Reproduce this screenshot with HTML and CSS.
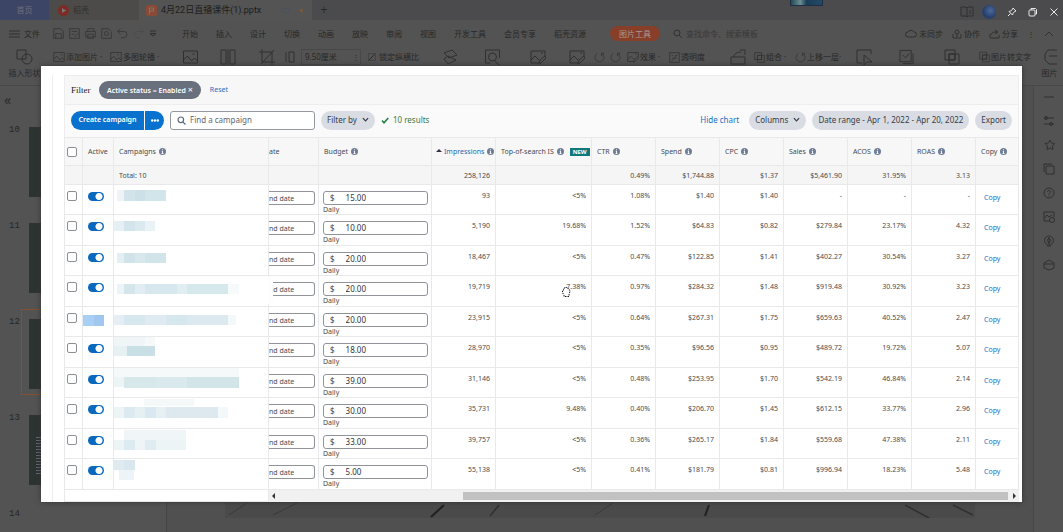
FILE: index.html
```html
<!DOCTYPE html>
<html lang="zh-CN">
<head>
<meta charset="utf-8">
<title>4月22日直播课件(1).pptx</title>
<link rel="stylesheet" href="styles.css">
</head>
<body>
<svg class="defs" width="0" height="0" aria-hidden="true">
  <symbol id="info" viewBox="0 0 14 14"><circle cx="7" cy="7" r="7" fill="#707d97"/><path d="M7 6v5M5.500 6.500H7M5 11h4M7 2.500v2" stroke="#fff" stroke-width="1.800"/></symbol>
  <symbol id="pic" viewBox="0 0 16 16"><path d="M1 2h14v12H1zM1 11l4-4 4 5 3-3 3 3M10 5h2"/></symbol>
  <symbol id="picpen" viewBox="0 0 16 16"><path d="M9 14H1V2h14v5M1 11l4-4 4 4M11 4h2M9 15l1-4 5-4 1 2-5 5z"/></symbol>
  <symbol id="chev" viewBox="0 0 8 8"><path d="M1 2.500l3 3 3-3" fill="none" stroke="currentColor" stroke-width="1.400"/></symbol>
  <symbol id="layers" viewBox="0 0 16 16"><path d="M1 1h10v10H1zM5 5h10v10H5zM5 5h6v6H5z"/></symbol>
  <symbol id="rot" viewBox="0 0 16 16"><path d="M11 2a6.500 6.500 0 1 1-6 0M11 6V2h4"/></symbol>
</svg>
<div class="app">
  <header class="titlebar">
    <a class="tab home" href="#">首页</a>
    <a class="tab docer" href="#"><svg width="11" height="11" viewBox="0 0 11 11"><circle cx="5.500" cy="5.500" r="5.500" fill="#7d2b25"/><path d="M4 3l4 2.500L4 8z" fill="#777"/></svg>稻壳</a>
    <a class="tab doc" href="#"><svg width="11" height="11" viewBox="0 0 11 11"><rect width="11" height="11" rx="2" fill="#8b4a36"/><path d="M3.500 9V3h4v3h-4" fill="none" stroke="#777"/></svg><span>4月22日直播课件(1).pptx</span><i class="cloud"></i><i class="dot"></i></a>
    <button class="plus" aria-label="New tab">+</button>
    <i class="recorder"></i>
    <div class="winctl">
      <svg class="dark" width="14" height="12" viewBox="0 0 14 12"><path d="M1 1h5l1 1 1-1h5v9H8l-1 1-1-1H1zM7 2v9M10 4v4"/></svg>
      <i class="avatar"></i>
      <button aria-label="Pin"><svg width="10" height="10" viewBox="0 0 10 10"><path d="M6 1l3 3-1.500.5L6 6.500 5.500 8 2 4.500 3.500 4 5.500 2.500zM3.500 6.500L1 9"/></svg></button>
      <button aria-label="Restore"><svg width="10" height="10" viewBox="0 0 10 10"><rect x="1" y="3" width="6" height="6" rx="1"/><path d="M3 3V1.500h4.500l1 1V7H7"/></svg></button>
      <button aria-label="Close"><svg width="10" height="10" viewBox="0 0 10 10"><path d="M1.500 1.500l7 7M8.500 1.500l-7 7"/></svg></button>
    </div>
  </header>
  <nav class="menubar">
    <span class="file"><svg width="11" height="10" viewBox="0 0 11 10"><path d="M0 2h11M0 5h11M0 8h11"/></svg>文件</span>
    <span class="quick">
      <svg width="11" height="11" viewBox="0 0 16 16"><path d="M1 1h10l4 4v10H1zM4 15V8h8v7"/></svg>
      <svg width="11" height="11" viewBox="0 0 16 16"><path d="M1 1h14v14H1zM4 5h8M4 9h4M8 13l6-6"/></svg>
      <svg width="11" height="11" viewBox="0 0 16 16"><path d="M4 5V1h9v4M1 5h14v8H1zM4 9h8v6H4z"/></svg>
      <svg width="11" height="11" viewBox="0 0 16 16"><path d="M1 1h10l4 4M1 1v14h14V6"/><circle cx="8" cy="8" r="3"/></svg>
      <svg width="11" height="11" viewBox="0 0 16 16"><path d="M5 1L1 5l4 4M1 5h9a4 4 0 0 1 0 9H6"/></svg>
      <svg class="faint" width="11" height="11" viewBox="0 0 16 16"><path d="M11 1l4 4-4 4M15 5H6a4 4 0 0 0 0 9h4"/></svg>
      <svg width="8" height="8" viewBox="0 0 8 8"><path d="M1 1h6M1 3.500h6L4 6z"/></svg>
    </span>
    <span class="menus"><a href="#">开始</a><a href="#">插入</a><a href="#">设计</a><a href="#">切换</a><a href="#">动画</a><a href="#">放映</a><a href="#">审阅</a><a href="#">视图</a><a href="#">开发工具</a><a href="#">会员专享</a><a href="#">稻壳资源</a><a class="active" href="#">图片工具</a></span>
    <span class="find"><svg width="9" height="9" viewBox="0 0 9 9"><circle cx="4" cy="4" r="3"/><path d="M6 6l3 3"/></svg>查找命令、搜索模板</span>
    <span class="share">
      <span><svg width="12" height="10" viewBox="0 0 12 10"><path d="M9 8H3a2.500 2.500 0 0 1 0-5 3.500 3.500 0 0 1 6 0 2.500 2.500 0 0 1 0 5z"/></svg>未同步</span>
      <span><svg width="10" height="10" viewBox="0 0 10 10"><circle cx="5" cy="3" r="2"/><path d="M1 5v4h8V5M5 5v3"/></svg>协作</span>
      <span><svg width="11" height="10" viewBox="0 0 11 10"><path d="M1 5v4h9V6M2 6c1-3 3-3 6-3M6 1l3 2-3 2"/></svg>分享</span>
      <span>⋮</span><svg width="10" height="6" viewBox="0 0 10 6"><path d="M1 5l4-4 4 4"/></svg>
    </span>
  </nav>
  <section class="ribbon">
    <span class="tall"><svg width="17" height="16" viewBox="0 0 17 16"><path d="M1 1h9v9H1z"/><circle cx="11" cy="10" r="5"/></svg>插入形状</span>
    <span><svg width="12" height="12"><use href="#pic"/></svg>添加图片 ·</span>
    <span><svg width="12" height="12"><use href="#pic"/></svg>多图轮播 ·</span>
    <span><svg width="17" height="16"><use href="#pic"/></svg></span>
    <span><svg width="16" height="16" viewBox="0 0 16 16"><path d="M1 1h5v14H1zM10 1h5v14h-5zM8 0v16"/></svg></span>
    <span><svg width="16" height="16" viewBox="0 0 16 16"><path d="M3 0v13h13M0 3h13v13M2 15L15 1"/></svg></span>
    <span><svg width="10" height="12" viewBox="0 0 10 12"><path d="M1 1v10M4 1h5v10H4z"/></svg></span>
    <span class="size">9.50厘米<b>⋮</b></span>
    <label><input type="checkbox" checked>锁定纵横比</label>
    <span><svg width="16" height="16" viewBox="0 0 16 16"><path d="M2 4l8-3 5 5-8 3zM2 10l4-3 8 4-8 4z"/></svg></span>
    <span><svg width="17" height="16" viewBox="0 0 16 16"><path d="M6 14H1V1h14v8M10 12l5 4"/><circle cx="8" cy="8" r="4"/></svg></span>
    <span><svg width="16" height="16"><use href="#picpen"/></svg></span>
    <span><svg width="16" height="16"><use href="#picpen"/></svg></span>
    <span><svg width="11" height="11"><use href="#rot"/></svg></span>
    <span><svg width="11" height="11"><use href="#rot"/></svg></span>
    <span><svg width="12" height="12"><use href="#picpen"/></svg>效果 ·</span>
    <span><svg width="11" height="11" viewBox="0 0 16 16"><path d="M1 1h14v14H1zM4 5h2M9 5h2M5 9h6M4 13L12 4"/></svg>透明度</span>
    <span><svg width="16" height="16" viewBox="0 0 16 16"><path d="M1 8h14v7H1zM10 1h5v5M4 8c0-4 4-5 7-5"/></svg></span>
    <span><svg width="11" height="11"><use href="#layers"/></svg>组合 ·</span>
    <span><svg width="11" height="11"><use href="#rot"/></svg>上移一层·</span>
    <span><svg width="16" height="16" viewBox="0 0 16 16"><path d="M6 14H1V1h14v4M8 6v10l3-3h5z"/></svg></span>
    <span><svg width="15" height="16" viewBox="0 0 16 16"><path d="M1 1h12v12H1zM15 4v11H4M4 6l3 3 4-5"/></svg></span>
    <span><svg width="16" height="16"><use href="#layers"/></svg></span>
    <span><svg width="11" height="12"><use href="#layers"/></svg>图片转文字</span>
    <span class="tall last"><svg width="16" height="16" viewBox="0 0 16 16"><path d="M15 1H6L3 5v6l4 4h8M7 7h8"/></svg>图片</span>
  </section>
  <main class="work">
    <aside class="slides">
      <button class="fold" aria-label="Collapse">«</button>
      <ol>
        <li><span>10</span><i></i></li>
        <li><span>11</span><i></i></li>
        <li class="current"><span>12</span><i></i></li>
        <li class="texty"><span>13</span><i></i></li>
        <li class="blank"><span>14</span><i></i></li>
      </ol>
    </aside>
    <div class="canvas"><svg class="slide" viewBox="0 0 750 16" preserveAspectRatio="none"><path d="M4 13L22 1M48 13L72 1M370 13L388 1" stroke="#3a3a3a"/><path d="M206 15l13-12M480 14l4-11" stroke="#202020" stroke-width="2"/><path d="M265 14l9-11M680 3l24 13M728 3l20 10" stroke="#303030" stroke-width="1.500"/></svg></div>
    <aside class="rail">
      <svg viewBox="0 0 12 12"><path d="M1 6h10"/></svg>
      <svg viewBox="0 0 12 12"><path d="M1 3h10M1 9h10"/><circle cx="3" cy="3" r="1.500"/><circle cx="8" cy="9" r="1.500"/></svg>
      <svg viewBox="0 0 12 12"><path d="M7 1l1.500 3 3 .5-2 2.500.5 3.500L7 9l-3 1.500L4.500 7 2 4.500 5.500 4z"/></svg>
      <svg viewBox="0 0 12 12"><path d="M1 9V1h8M3 3h8v8H3z"/></svg>
      <svg viewBox="0 0 12 12"><circle cx="6" cy="6" r="5"/><path d="M4.500 5c0-2 3-2 3 0C7.500 6 6 6 6 7.500M6 8.500v1"/></svg>
      <svg viewBox="0 0 12 12"><path d="M7 10H1V1h10v5M2 7l2-3 2 2 3-2"/><circle cx="9" cy="9" r="2.500"/></svg>
      <svg viewBox="0 0 12 12"><circle cx="6" cy="5.500" r="4.500"/><path d="M6 2v7M4 5.500L6 3l2 2.500L6 8zM4 11h4"/></svg>
      <svg viewBox="0 0 12 12"><path d="M1 4l5-3 5 3v5l-5 2-5-2zM1 5h10"/></svg>
    </aside>
  </main>
</div>

<div class="overlay">
  <div class="viewer" role="dialog" aria-label="Campaigns">
    <div class="panel">
      <div class="filterbar"><span class="word">Filter</span><button class="status">Active status = Enabled <span>×</span></button><a href="#">Reset</a></div>
      <div class="toolbar">
        <div class="split"><button>Create campaign</button><button aria-label="More"><svg width="8" height="3" viewBox="0 0 8 3"><circle cx="1.200" cy="1.500" r="1.200"/><circle cx="4" cy="1.500" r="1.200"/><circle cx="6.800" cy="1.500" r="1.200"/></svg></button></div>
        <label class="search"><svg width="9" height="9" viewBox="0 0 9 9"><circle cx="3.800" cy="3.800" r="2.800"/><path d="M5.800 5.800L8.500 8.500"/></svg><input type="text" placeholder="Find a campaign" aria-label="Find a campaign"></label>
        <button class="pill">Filter by <svg width="7" height="7"><use href="#chev"/></svg></button>
        <span class="results"><svg width="8" height="7" viewBox="0 0 8 7"><path d="M1 3.500l2 2.200L7.300 1"/></svg>10 results</span>
        <a class="hide" href="#">Hide chart</a>
        <button class="pill">Columns <svg width="7" height="7"><use href="#chev"/></svg></button>
        <button class="pill date">Date range - Apr 1, 2022 - Apr 20, 2022</button>
        <button class="pill">Export</button>
      </div>
      <table>
        <colgroup><col class="c-check"><col class="c-active"><col class="c-name"><col class="c-end"><col class="c-budget"><col class="c-num"><col class="c-top"><col class="c-num"><col class="c-num"><col class="c-num"><col class="c-num"><col class="c-num"><col class="c-num"><col class="c-copy"></colgroup>
        <thead>
          <tr>
            <th><input type="checkbox" aria-label="Select all"></th><th>Active</th>
            <th>Campaigns <svg><use href="#info"/></svg></th><th class="cut">ate</th>
            <th>Budget <svg><use href="#info"/></svg></th>
            <th class="sorted"><i></i>Impressions <svg><use href="#info"/></svg></th>
            <th>Top-of-search IS <svg><use href="#info"/></svg><b class="new">NEW</b></th>
            <th>CTR <svg><use href="#info"/></svg></th><th>Spend <svg><use href="#info"/></svg></th><th>CPC <svg><use href="#info"/></svg></th><th>Sales <svg><use href="#info"/></svg></th><th>ACOS <svg><use href="#info"/></svg></th><th>ROAS <svg><use href="#info"/></svg></th><th>Copy <svg><use href="#info"/></svg></th>
          </tr>
          <tr class="total"><td></td><td></td><td>Total: 10</td><td></td><td></td><td class="n">258,126</td><td></td><td class="n">0.49%</td><td class="n">$1,744.88</td><td class="n">$1.37</td><td class="n">$5,461.90</td><td class="n">31.95%</td><td class="n">3.13</td><td></td></tr>
        </thead>
        <tbody id="rows"></tbody>
      </table>
      <div class="scrollrow"><div class="frozen"></div><div class="scroll"><i class="left"></i><i class="thumb"></i><i class="right"></i></div></div>
    </div>
  </div>
</div>
<svg class="cursor" width="10" height="11" viewBox="0 0 10 11"><path d="M2 5L1 6l2 3v1.500h5V9l1-4-1-2-1-1-1 .5L5 1 4 2 3 2z" fill="#fff" stroke="#111" stroke-dasharray="1.500 1"/></svg>
<script src="app.js"></script>
</body>
</html>
```
FILE: app.js
```js
const rows = [
  ["15.00", "93", "<5%", "1.08%", "$1.40", "$1.40", "-", "-", "-"],
  ["10.00", "5,190", "19.68%", "1.52%", "$64.83", "$0.82", "$279.84", "23.17%", "4.32"],
  ["20.00", "18,467", "<5%", "0.47%", "$122.85", "$1.41", "$402.27", "30.54%", "3.27"],
  ["20.00", "19,719", "7.38%", "0.97%", "$284.32", "$1.48", "$919.48", "30.92%", "3.23"],
  ["20.00", "23,915", "<5%", "0.64%", "$267.31", "$1.75", "$659.63", "40.52%", "2.47"],
  ["18.00", "28,970", "<5%", "0.35%", "$96.56", "$0.95", "$489.72", "19.72%", "5.07"],
  ["39.00", "31,146", "<5%", "0.48%", "$253.95", "$1.70", "$542.19", "46.84%", "2.14"],
  ["30.00", "35,731", "9.48%", "0.40%", "$206.70", "$1.45", "$612.15", "33.77%", "2.96"],
  ["33.00", "39,757", "<5%", "0.36%", "$265.17", "$1.84", "$559.68", "47.38%", "2.11"],
  ["5.00", "55,138", "<5%", "0.41%", "$181.79", "$0.81", "$996.94", "18.23%", "5.48"],
];

// Masked campaign names: [x, y, width, height, colour] blocks inside each cell.
const masks = [
  [[3, 5, 7, 11, "#eef4f6"], [10, 5, 11, 11, "#d2e4e9"], [21, 5, 10, 11, "#cbe1e7"], [31, 5, 21, 11, "#d2e5ea"]],
  [[0, 6, 10, 10, "#e6eff4"], [10, 6, 11, 10, "#d3e5ea"], [21, 6, 10, 10, "#dbeaee"], [31, 6, 10, 10, "#e9f3f5"]],
  [[3, 7, 7, 10, "#e4eff3"], [10, 7, 11, 10, "#cfe3e8"], [21, 7, 10, 10, "#d8e8ed"], [31, 7, 21, 10, "#d1e4e9"]],
  [[3, 8, 7, 10, "#edf4f7"], [10, 8, 11, 10, "#d4e6ec"], [21, 8, 10, 10, "#e1edf2"], [31, 8, 32, 10, "#d6e7ee"], [63, 8, 10, 10, "#e0edf1"], [73, 8, 41, 10, "#d5e8ec"], [114, 8, 11, 10, "#f6fafb"]],
  [[0, 8, 10, 10, "#e6eef5"], [10, 8, 21, 10, "#d6e7ed"], [31, 8, 21, 10, "#dfebf1"], [52, 8, 21, 10, "#d6e7ed"], [73, 8, 41, 10, "#dce9ef"], [114, 8, 8, 10, "#f4f8f9"]],
  [[0, 0, 31, 9, "#f0f6f7"], [31, 0, 10, 9, "#f5f9fa"], [0, 9, 13, 10, "#e6f1f4"], [13, 9, 28, 10, "#c8e0e5"]],
  [[0, 0, 125, 9, "#f5f9f9"], [0, 9, 10, 10, "#edf4f5"], [10, 9, 32, 11, "#d6e8e9"], [42, 9, 31, 11, "#d9e9ed"], [73, 9, 52, 11, "#d2e6e9"]],
  [[30, 1, 50, 7, "#f5f8f8"], [0, 9, 10, 11, "#edf4f6"], [10, 9, 11, 11, "#dce9f1"], [21, 9, 10, 11, "#e5f0f3"], [31, 9, 11, 11, "#dae9f1"], [42, 9, 10, 11, "#e6f0f3"], [52, 9, 52, 11, "#dde9ef"], [104, 9, 10, 11, "#f3f8fa"]],
  [[10, 1, 62, 10, "#f0f6f7"], [0, 11, 10, 10, "#edf4f6"], [10, 11, 11, 10, "#dceaf1"], [21, 11, 10, 10, "#eff5f7"], [31, 11, 11, 10, "#dfedf2"], [42, 11, 30, 10, "#ecf4f6"]],
  [[0, 1, 10, 10, "#e0ebf1"], [10, 1, 11, 10, "#d9e7ee"], [5, 11, 15, 10, "#edf4f7"]],
];

document.getElementById("rows").innerHTML = rows.map((row, i) => {
  const [budget, ...nums] = row;
  const blocks = masks[i].map(([x, y, w, h, c]) => `<rect x="${x}" y="${y}" width="${w}" height="${h}" fill="${c}"/>`).join("");
  const active = i === 4
    ? `<span class="masked"></span>`
    : `<input type="checkbox" role="switch" class="switch" checked aria-label="Active ${i + 1}">`;
  const cells = nums.map(n => `<td class="n">${n.replace("<", "&lt;")}</td>`).join("");
  return `<tr><td><input type="checkbox" aria-label="Select ${i + 1}"></td><td>${active}</td>` +
    `<td class="name"><svg viewBox="0 0 126 24" width="126" height="24">${blocks}</svg></td>` +
    `<td class="end"><input type="text" value="nd date" aria-label="End date ${i + 1}"></td>` +
    `<td class="budget"><label class="money">$<input type="text" value="${budget}" aria-label="Budget ${i + 1}"></label><small>Daily</small></td>` +
    `${cells}<td class="copy"><a href="#">Copy</a></td></tr>`;
}).join("");
```
FILE: styles.css
```css
* { box-sizing: border-box; }
body { margin: 0; background: #535353; color: #282828; font: 8px/12px "Noto Sans", "Noto Sans CJK SC", sans-serif; }
a { color: inherit; text-decoration: none; }
button, input { font: inherit; color: inherit; }
button { border: 0; padding: 0; background: none; }
i, b { font-style: normal; }
.defs { position: absolute; }
.app { display: flex; flex-direction: column; height: 100vh; overflow: hidden; }
.app svg { fill: none; stroke: #303030; stroke-width: 1; flex: none; }
.app .faint { opacity: 0.3; }

.titlebar { display: flex; height: 20px; background: #4b4b4d; align-items: stretch; flex: none; }
.tab { display: flex; align-items: center; gap: 4px; }
.tab svg { stroke: none; }
.home { width: 49px; justify-content: center; background: #3c4566; color: #70707a; }
.docer { width: 90px; padding-left: 9px; background: #4d4b49; color: #303030; }
.doc { width: 173px; padding-left: 7px; background: #545454; font-family: Roboto, "Noto Sans CJK SC", sans-serif; font-size: 9px; color: #1c1c1c; }
.cloud { width: 8px; height: 5px; margin-left: auto; border-radius: 4px; border: 1px solid #4a5060; }
.dot { width: 3px; height: 3px; margin: 0 9px 0 6px; border-radius: 50%; background: #855a2c; }
.plus { width: 24px; font-size: 12px; color: #2a2a2a; }
.recorder { width: 33px; height: 6px; margin-left: auto; background: linear-gradient(90deg, #234a55, #6b8f90 30%, #1b3d58 50%, #234b66); border: 1px solid #1e2f45; border-top: 0; }
.winctl { display: flex; align-items: center; gap: 11px; margin: 3px 4px 0 137px; }
.winctl button svg { stroke: #e8e8e8; display: block; }
.winctl .dark { margin-right: -3px; }
.avatar { width: 14px; height: 14px; border-radius: 50%; background: radial-gradient(circle at 60% 40%, #4a6a9a, #263e6c 60%, #35507f); }

.menubar { display: flex; align-items: center; height: 27px; flex: none; white-space: nowrap; }
.file, .find, .share span { display: flex; align-items: center; gap: 4px; }
.file { padding-left: 9px; width: 53px; }
.quick { display: flex; align-items: center; gap: 5px; width: 129px; }
.menus { display: flex; align-items: center; gap: 18px; }
.active { background: #873f29; color: #a99; border-radius: 8px; padding: 1px 9px; line-height: 13px; margin-left: 6px; }
.find { margin-left: 13px; color: #383838; }
.share { display: flex; align-items: center; gap: 9px; margin: 0 9px 0 auto; }
.share span { gap: 2px; }

.ribbon { display: grid; flex: none; height: 39px; overflow: hidden; white-space: nowrap; align-items: start; padding: 2px 0 0 7px; border-bottom: 1px solid #484848;
  grid-template-columns: 46px 57px 72px 38px 39px 26px 16px 63px 78px 42px 46px 39px 25px 16px 17px 42px 61px 24px 41px 61px 43px 45px 35px 57px 1fr; }
.ribbon > * { display: flex; align-items: center; gap: 1px; height: 16px; }
.ribbon .tall { flex-direction: column; height: 36px; gap: 2px; align-items: center; width: 35px; }
.ribbon .last { width: auto; }
.size { border: 1px solid #484848; margin-right: 3px; padding-left: 3px; justify-content: space-between; }
.size b { font-weight: 400; }
.ribbon label { gap: 3px; padding-left: 4px; }
.ribbon input { appearance: none; width: 8px; height: 8px; margin: 0; border: 1px solid #444; background: linear-gradient(135deg, transparent 42%, #2c2c2c 42%, #2c2c2c 58%, transparent 58%); }

.work { display: flex; flex: 1; min-height: 0; }
.slides { width: 167px; border-right: 1px solid #444; overflow: hidden; }
.fold { display: block; font-size: 14px; line-height: 14px; margin: 7px 0 0 4px; color: #2b2b2b; }
.slides ol { list-style: none; margin: 10px 0 0; padding: 0; }
.slides li { display: flex; height: 86px; margin: 0 0 10px 21px; padding: 9px 0 5px 7px; border: 1px solid transparent; }
.slides li span { width: 13px; margin: -3px 0 0 -20px; font: 9px/12px "Liberation Mono", monospace; color: #262626; }
.slides li i { flex: 1; margin-left: 7px; background: #2c3431; }
.slides .current { border-color: #84502f; }
.slides .texty i { background: linear-gradient(#2c3431 0 20px, transparent 20px 60px, #2c3431 60px), repeating-linear-gradient(#2c3431 0 1px, #667 1px 2px, #2c3431 2px 3px) 7px 0 / 5px 100% no-repeat, #2c3431; }
.slides .blank i { background: none; }
.canvas { flex: 1; display: flex; align-items: flex-end; padding: 0 58px 14px; background: #505050; }
.canvas .slide { width: 100%; height: 16px; background: #4a4a4a; }
.rail { width: 30px; border-left: 1px solid #474747; display: flex; flex-direction: column; align-items: center; gap: 12px; padding-top: 5px; }
.rail svg { width: 12px; height: 12px; }

.overlay { position: absolute; inset: 0; padding: 66px 41px 0; }
.viewer { background: #fff; padding: 9px 3px 0 11px; box-shadow: 0 0 5px #333; color: #484b50; }
.panel { border-left: 1px solid #eee; padding-left: 11px; }
.filterbar, .toolbar { display: flex; align-items: center; background: #f7f7f7; border: 1px solid #ededed; border-bottom: 0; }
.filterbar { height: 29px; padding-left: 6px; }
.word { width: 28px; font: 9px/12px "Liberation Serif", serif; color: #222; }
.status { background: #686f7d; color: #fff; font-weight: 600; font-size: 7px; height: 18px; border-radius: 9px; padding: 0 8px; margin-right: 9px; }
.status span { font-weight: 400; font-size: 9px; }
.viewer a { color: #1b6fc4; }
.filterbar a { font-size: 7px; }
.toolbar { height: 33px; padding: 0 6px 2px; gap: 6px; background: #fafafa; font-size: 7px; }
.split { display: flex; gap: 1px; }
.split button { height: 19px; background: #0972ce; color: #fff; font-weight: 600; font-size: 7px; white-space: nowrap; width: 73px; border-radius: 10px 0 0 10px; }
.split button + button { width: 19px; border-radius: 0 10px 10px 0; }
.split svg { fill: #fff; display: block; margin: auto; }
.search { display: flex; align-items: center; gap: 4px; width: 145px; height: 19px; padding-left: 6px; background: #fff; border: 1px solid #9499a0; border-radius: 3px; }
.search svg { fill: none; stroke: #596780; stroke-width: 1.2; flex: none; }
.search input { border: 0; outline: 0; padding: 0; width: 120px; background: none; font-size: 8px; }
.search input::placeholder { color: #62666c; }
.pill { height: 19px; padding: 0 6px; border-radius: 10px; background: #d9dde3; color: #363c49; font-size: 8px; white-space: nowrap; }
.pill svg { margin-left: 3px; }
.results { display: flex; align-items: center; gap: 4px; color: #397a45; font-size: 8px; }
.results svg { fill: none; stroke: #238048; stroke-width: 1.6; }
.hide { margin-left: auto; margin-right: 4px; font-size: 8px; }

table { width: 100%; table-layout: fixed; border-collapse: separate; border-spacing: 0; font-size: 7px; }
.c-check { width: 19px; } .c-active { width: 31px; } .c-name { width: 155px; } .c-end { width: 50px; } .c-budget { width: 113px; }
.c-num { width: 64px; } .c-top { width: 96px; } .c-copy { width: 43px; }
th, td { padding: 0 5px; border-right: 1px solid #e9e9e9; border-bottom: 1px solid #e9e9e9; text-align: left; font-weight: 400; white-space: nowrap; }
th:first-child, td:first-child { border-left: 1px solid #e9e9e9; padding: 0 0 0 2px; }
th { height: 29px; background: #f7f7f7; border-top: 1px solid #e9e9e9; }
th svg { width: 7px; height: 7px; margin-left: 1px; vertical-align: -1px; }
th.cut { padding-left: 0; }
.sorted { color: #2868ad; }
.sorted i { display: inline-block; border: 3px solid transparent; border-top: 0; border-bottom-color: #334; margin: 0 2px 2px 0; }
th.sorted { padding: 0 3px 0 4px; text-align: right; }
.new { background: #11797b; color: #fff; font-size: 6px; line-height: 8px; padding: 0 3px; margin-left: 6px; display: inline-block; }
.total td { height: 19px; padding-top: 2px; background: #f5f5f5; }
.n { text-align: right; }
tbody td { height: 30px; vertical-align: top; padding-top: 5px; }
tbody tr:nth-child(even) td { height: 31px; }
th input, td input[type="checkbox"] { appearance: none; display: block; width: 10px; height: 10px; margin: 0; border: 1px solid #8b8f94; border-radius: 2px; background: #fff; }
tbody td:first-child { padding-top: 6px; }
td input.switch { width: 16px; height: 9px; margin: 2px 0 0; border: 0; border-radius: 5px; background: radial-gradient(circle at 11px 50%, #fff 3px, transparent 4px), linear-gradient(135deg, transparent 48%, #fff 48% 54%, transparent 54%) 3px 2px / 4px 5px no-repeat, #0b69bd; }
.masked { display: block; width: 21px; height: 11px; margin: 3px 0 0 -5px; background: linear-gradient(90deg, #a9cff4 50%, #a0c7f0 50%); }
tbody .name { padding: 0; }
.name svg { display: block; }
tbody .end { padding: 6px 3px 0 0; position: relative; }
.end input { display: block; width: 100%; height: 14px; padding: 0; border: 1px solid #90949a; border-left: 0; border-radius: 0 3px 3px 0; font-size: 7px; }
tr:nth-child(4) .end::before { content: ""; position: absolute; left: -1px; top: 0; width: 5px; height: 28px; background: #fdfdfd; border-radius: 0 4px 4px 0; }
tbody .budget { padding: 6px 3px 0 4px; }
.money { display: flex; align-items: center; gap: 11px; height: 14px; padding-left: 6px; border: 1px solid #90949a; border-radius: 3px; font-size: 8px; }
.money input { width: 70px; border: 0; padding: 0; background: none; color: #303238; }
small { display: block; font-size: 7px; line-height: 9px; }
tbody .copy { padding: 7px 0 0 8px; }
.scrollrow { display: flex; height: 12px; }
.frozen { width: 205px; border: 1px solid #e9e9e9; border-top: 0; }
.scroll { flex: 1; display: flex; align-items: center; padding: 0 3px; background: #f1f1f1; }
.left, .right { border: 3px solid transparent; }
.left { border-right-color: #333; border-left: 0; }
.right { border-left-color: #333; border-right: 0; }
.thumb { width: 545px; height: 8px; margin: 0 5px 0 auto; background: #c1c1c1; }
.cursor { position: absolute; left: 561px; top: 286px; }
```
